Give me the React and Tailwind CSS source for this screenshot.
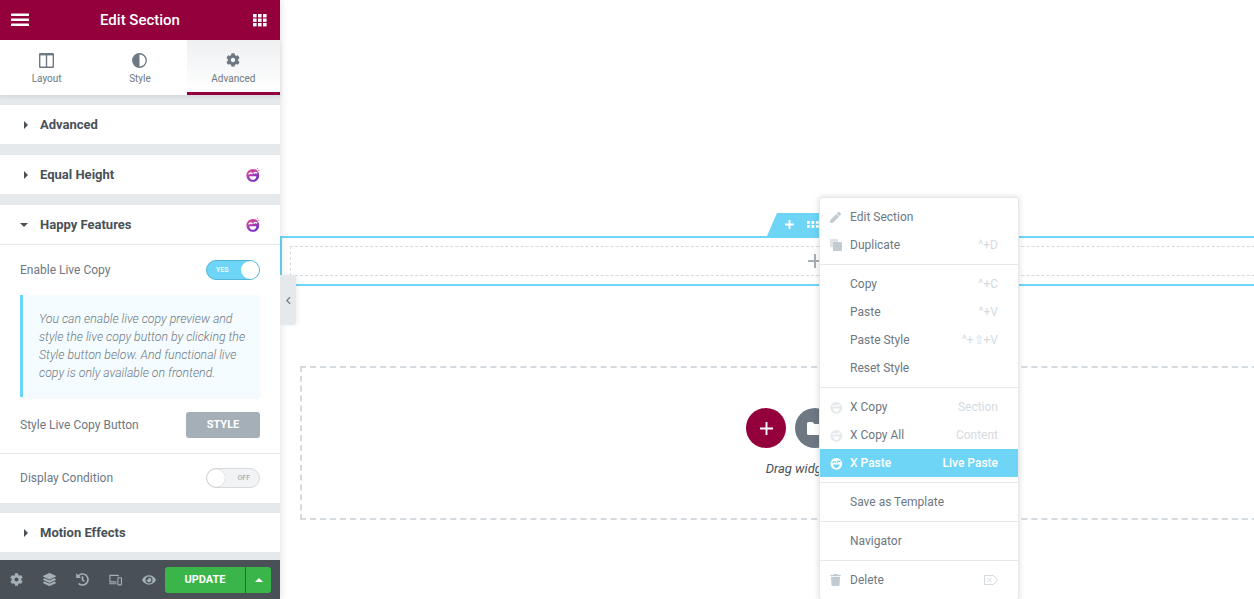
import React from 'react';
import { FaCog, FaEye, FaTrash, FaPen, FaHistory, FaLayerGroup } from 'react-icons/fa';

// little smiley badge used by the Happy addons rows
const HappyIcon = ({ id, fill, face = '#fff', className }) => (
  <svg viewBox="0 0 14 14" className={className}>
    {id && (
      <defs>
        <linearGradient id={id} x1="0.1" y1="0" x2="0.7" y2="1">
          <stop offset="0" stopColor="#ea4f8f" />
          <stop offset="1" stopColor="#6a2bd0" />
        </linearGradient>
      </defs>
    )}
    <circle cx="6.8" cy="7.4" r="6.4" fill={id ? `url(#${id})` : fill} />
    <path d="M2.6 6.4 C4 4.6 5.4 4.6 6.4 6 M7.6 5.6 C8.6 4.4 10 4.2 11.2 5.2" stroke={face} strokeWidth="1.5" fill="none" />
    <path d="M3.2 8.2 H10.4 C10 10.8 8.4 11.8 6.8 11.8 C5.2 11.8 3.6 10.8 3.2 8.2 Z" fill={face} />
    {id && <path d="M10.6 1.2 L12.4 0.2 M11.8 2.6 L13.6 2.2" stroke="#e2498a" strokeWidth="0.7" />}
  </svg>
);

const Caret = ({ open }) =>
  open ? (
    <span className="w-0 h-0 border-x-[4px] border-x-transparent border-t-[4px] border-t-[#495157]" />
  ) : (
    <span className="w-0 h-0 ml-[4px] mr-[3px] border-y-[4px] border-y-transparent border-l-[4px] border-l-[#495157]" />
  );

const SectionHead = ({ title, open, happy, id, border }) => (
  <div className={`bg-white flex items-center pl-[20px] pr-[20px] ${border ? 'h-[40px] border-b border-[#e6e9ec]' : 'h-[39px]'}`}>
    <div className="w-[20px] flex items-center"><Caret open={open} /></div>
    <span className="text-[13px] font-bold text-[#495157] flex-1">{title}</span>
    {happy && <HappyIcon id={id} className="w-[14px] h-[14px]" />}
  </div>
);

const MenuRow = ({ icon, label, hint, active }) => (
  <div className={`h-[28px] flex items-center pl-[10px] pr-[20px] text-[12px] ${active ? 'bg-[#6ed5f6] text-white font-medium' : 'text-[#6d7882]'}`}>
    <span className={`w-[20px] flex items-center ${active ? 'text-white' : 'text-[#c2cbd2]'}`}>{icon}</span>
    <span className="flex-1">{label}</span>
    {hint && <span className={active ? 'text-white' : 'text-[#d5dadf]'}>{hint}</span>}
  </div>
);

const Tab = ({ icon, label, active }) => (
  <div className={`flex-1 flex flex-col items-center pt-[12px] text-[#6d7882] ${active ? 'bg-gradient-to-b from-[#eef0f2] to-white border-b-[3px] border-[#93003c]' : ''}`}>
    <div className="h-[16px] flex items-center justify-center">{icon}</div>
    <span className="mt-[5px] text-[10px] leading-[12px]">{label}</span>
  </div>
);

const App = () => {
  return (
    <div className="relative w-[1254px] h-[599px] overflow-hidden bg-white flex font-['Roboto',sans-serif]">
      {/* sidebar */}
      <aside className="relative z-20 w-[280px] shrink-0 h-[599px] bg-[#e6e9ec] flex flex-col shadow-[0_0_8px_rgba(0,0,0,0.15)]">
        <header className="h-[40px] shrink-0 bg-[#93003c] flex items-center justify-between pl-[11px] pr-[13px] text-white">
          <svg viewBox="0 0 18 14" className="w-[18px] h-[14px]" fill="#fff">
            <rect y="0.5" width="18" height="2.6" rx="0.5" />
            <rect y="5.5" width="18" height="2.6" rx="0.5" />
            <rect y="10.5" width="18" height="2.6" rx="0.5" />
          </svg>
          <span className="text-[15px] font-medium mr-[2px]">Edit Section</span>
          <svg viewBox="0 0 14 13" className="w-[14px] h-[13px]" fill="#fff">
            {[0, 5, 10].map((x) => [0, 4.5, 9].map((y) => <rect key={`${x}-${y}`} x={x} y={y} width="3.6" height="3.4" />))}
          </svg>
        </header>

        <nav className="h-[55px] shrink-0 bg-white flex shadow-[0_2px_4px_rgba(0,0,0,0.08)]">
          <Tab
            label="Layout"
            icon={
              <svg viewBox="0 0 15 15" className="w-[15px] h-[15px]" fill="none" stroke="#6d7882" strokeWidth="1.4">
                <rect x="0.7" y="0.7" width="13.6" height="13.6" rx="0.5" />
                <path d="M7.5 1v13" />
                <path d="M1 1.6h13" strokeWidth="1.6" />
              </svg>
            }
          />
          <Tab
            label="Style"
            icon={
              <svg viewBox="0 0 16 16" className="w-[15px] h-[15px]">
                <circle cx="8" cy="8" r="7.2" fill="none" stroke="#6d7882" strokeWidth="1.4" />
                <path d="M8 1a7 7 0 0 0 0 14z" fill="#6d7882" />
              </svg>
            }
          />
          <Tab label="Advanced" active icon={<FaCog className="w-[14px] h-[14px]" />} />
        </nav>

        <div className="flex-1 min-h-0 pt-[10px] flex flex-col gap-[11px] overflow-hidden">
          <SectionHead title="Advanced" />
          <SectionHead title="Equal Height" happy id="hg1" />
          <div className="bg-white">
            <SectionHead title="Happy Features" open happy id="hg2" border />
            <div className="px-[20px] pt-[15px]">
              <div className="flex items-center justify-between h-[20px] text-[12px] text-[#6d7882]">
                <span>Enable Live Copy</span>
                <span className="relative w-[54px] h-[20px] rounded-full bg-[#6ed5f6] border border-[#55b4d4]">
                  <span className="absolute left-[9px] top-[3px] text-[7px] leading-[12px] font-medium text-white">YES</span>
                  <span className="absolute right-0 top-0 w-[18px] h-[18px] rounded-full bg-white" />
                </span>
              </div>
              <div className="mt-[15px] h-[102px] bg-[#f4fcff] border-l-[3px] border-[#6ed5f6] pl-[16px] pr-[8px] pt-[15px] text-[12.3px] leading-[18px] italic font-light text-[#6d7882] rounded-r-[3px] shadow-[0_1px_3px_rgba(0,0,0,0.05)]">
                You can enable live copy preview and style the live copy button by clicking the Style button below. And functional live copy is only available on frontend.
              </div>
              <div className="mt-[15px] flex items-center justify-between text-[12px] text-[#6d7882]">
                <span>Style Live Copy Button</span>
                <span className="w-[74px] h-[26px] rounded-[3px] bg-[#a4afb7] text-white text-[11px] font-bold flex items-center justify-center">STYLE</span>
              </div>
            </div>
            <div className="mt-[15px] border-t border-[#e6e9ec] px-[20px] pb-[2px] h-[50px] flex items-center justify-between text-[12px] text-[#6d7882]">
              <span>Display Condition</span>
              <span className="relative w-[54px] h-[20px] rounded-full bg-[#f1f3f5] border border-[#d5dadf]">
                <span className="absolute right-[9px] top-[3px] text-[7px] leading-[12px] font-medium text-[#a4afb7]">OFF</span>
                <span className="absolute left-0 top-0 w-[18px] h-[18px] rounded-full bg-white shadow-[0_0_1px_rgba(0,0,0,0.3)]" />
              </span>
            </div>
          </div>
          <div className="-mt-[1px]">
            <SectionHead title="Motion Effects" />
          </div>
        </div>

        <footer className="h-[39px] shrink-0 bg-[#495157] flex items-center text-[#a4afb7] relative">
          <div className="flex items-center pl-[10px] gap-[20px]">
            <FaCog className="w-[13px] h-[13px]" />
            <FaLayerGroup className="w-[13px] h-[13px]" />
            <FaHistory className="w-[13px] h-[13px]" />
            <svg viewBox="0 0 14 12" className="w-[13px] h-[12px]" fill="none" stroke="#a4afb7" strokeWidth="1.2">
              <path d="M10 2V1H1v7h7M0 10h8" />
              <rect x="9.6" y="3.6" width="3.8" height="7.6" rx="0.5" />
            </svg>
            <FaEye className="w-[14px] h-[14px]" />
          </div>
          <div className="absolute left-[165px] top-[7px] h-[26px] w-[106px] flex text-white">
            <span className="w-[80px] bg-[#39b54a] rounded-l-[3px] flex items-center justify-center text-[11px] font-bold">UPDATE</span>
            <span className="ml-[1px] flex-1 bg-[#39b54a] rounded-r-[3px] flex items-center justify-center">
              <span className="w-0 h-0 border-x-[4px] border-x-transparent border-b-[4px] border-b-white" />
            </span>
          </div>
        </footer>

        {/* collapse handle */}
        <div className="absolute left-[280px] top-[275px] w-[16px] h-[50px] bg-[#e6e9ec] rounded-r-[3px] shadow-[2px_0_4px_rgba(0,0,0,0.06)] flex items-center justify-center text-[#6d7882]">
          <svg viewBox="0 0 6 10" className="w-[5px] h-[9px]" fill="none" stroke="#6d7882" strokeWidth="1.5"><path d="M5 1 1 5l4 4" /></svg>
        </div>
      </aside>

      {/* canvas */}
      <main className="flex-1 min-w-0 pt-[236px] overflow-hidden">
        <section className="relative w-[1100px] h-[50px] border-y-2 border-l-2 border-[#6ed5f6] pl-[8px] py-[8px]">
          <div className="relative h-[30px] border border-dashed border-r-0 border-[#d5dadf]">
            <svg viewBox="0 0 14 14" className="absolute left-[517px] top-[7px] w-[14px] h-[14px]" fill="#a4afb7"><path d="M6 0h2v6h6v2H8v6H6V8H0V6h6z" /></svg>
          </div>
        </section>

        <section className="mt-[80px] ml-[20px] w-[1028px] h-[154px] border-2 border-dashed border-r-0 border-[#d5dadf] flex flex-col items-center pt-[40px]">
          <div className="flex gap-[9px]">
            <span className="w-[40px] h-[40px] rounded-full bg-[#93003c] flex items-center justify-center">
              <svg viewBox="0 0 14 14" className="w-[13px] h-[13px]" fill="#fff"><path d="M6 0h2v6h6v2H8v6H6V8H0V6h6z" /></svg>
            </span>
            <span className="w-[40px] h-[40px] rounded-full bg-[#6d7882] flex items-center justify-center">
              <svg viewBox="0 0 16 13" className="w-[16px] h-[13px]" fill="#fff"><path d="M0 1.5A1.5 1.5 0 0 1 1.5 0h4l2 2h7A1.5 1.5 0 0 1 16 3.5v8a1.5 1.5 0 0 1-1.5 1.5h-13A1.5 1.5 0 0 1 0 11.5z" /></svg>
            </span>
            <span className="w-[40px] h-[40px] rounded-full bg-[#d5dadf]" />
          </div>
          <p className="mt-[13px] mr-[4px] text-[13px] italic text-[#495157] leading-[16px]">Drag widget here</p>
        </section>
      </main>

      {/* section handle */}
      <div className="absolute z-10 left-[767px] top-[213px] w-[70px] h-[23px] bg-[#6ed5f6] rounded-t-[4px] [clip-path:polygon(10px_0,100%_0,100%_100%,0_100%)] flex items-center pl-[18px] gap-[13px] text-white">
        <svg viewBox="0 0 10 10" className="w-[9px] h-[9px]" fill="#fff"><path d="M4 0h2v4h4v2H6v4H4V6H0V4h4z" /></svg>
        <svg viewBox="0 0 12 7" className="w-[12px] h-[7px]" fill="#fff">
          {[0, 4.5, 9].map((x) => [0, 4].map((y) => <rect key={`${x}${y}`} x={x} y={y} width="2.8" height="2.8" />))}
        </svg>
      </div>

      {/* context menu */}
      <div className="absolute z-30 left-[819px] top-[197px] w-[200px] bg-white rounded-[3px] border border-[#e6e9ec] shadow-[0_0_6px_rgba(0,0,0,0.15)] text-[12px]">
        <div className="pt-[5px] pb-[5px] border-b border-[#e6e9ec]">
          <MenuRow label="Edit Section" icon={<FaPen className="w-[11px] h-[11px]" />} />
          <MenuRow
            label="Duplicate"
            hint="^+D"
            icon={
              <svg viewBox="0 0 12 12" className="w-[12px] h-[12px]">
                <rect x="0" y="0" width="8" height="8" fill="#dfe3e7" />
                <rect x="3" y="3" width="9" height="9" rx="1" fill="#c2cbd2" />
              </svg>
            }
          />
        </div>
        <div className="py-[5px] border-b border-[#e6e9ec]">
          <MenuRow label="Copy" hint="^+C" />
          <MenuRow label="Paste" hint="^+V" />
          <MenuRow label="Paste Style" hint="^+⇧+V" />
          <MenuRow label="Reset Style" />
        </div>
        <div className="py-[5px] border-b border-[#e6e9ec]">
          <MenuRow label="X Copy" hint="Section" icon={<HappyIcon fill="#e6e9ec" className="w-[13px] h-[13px]" />} />
          <MenuRow label="X Copy All" hint="Content" icon={<HappyIcon fill="#e6e9ec" className="w-[13px] h-[13px]" />} />
          <MenuRow label="X Paste" hint="Live Paste" active icon={<HappyIcon fill="#fff" face="#6ed5f6" className="w-[13px] h-[13px]" />} />
        </div>
        <div className="py-[5px] border-b border-[#e6e9ec]">
          <MenuRow label="Save as Template" />
        </div>
        <div className="py-[5px] border-b border-[#e6e9ec]">
          <MenuRow label="Navigator" />
        </div>
        <div className="py-[5px]">
          <MenuRow
            label="Delete"
            icon={<FaTrash className="w-[11px] h-[12px]" />}
            hint={
              <svg viewBox="0 0 14 10" className="w-[14px] h-[10px]" fill="none" stroke="#d5dadf" strokeWidth="1">
                <path d="M0.5 0.5h9l4 4.5-4 4.5h-9zM3.5 3l4 4M7.5 3l-4 4" />
              </svg>
            }
          />
        </div>
      </div>
    </div>
  );
};

export default App;
